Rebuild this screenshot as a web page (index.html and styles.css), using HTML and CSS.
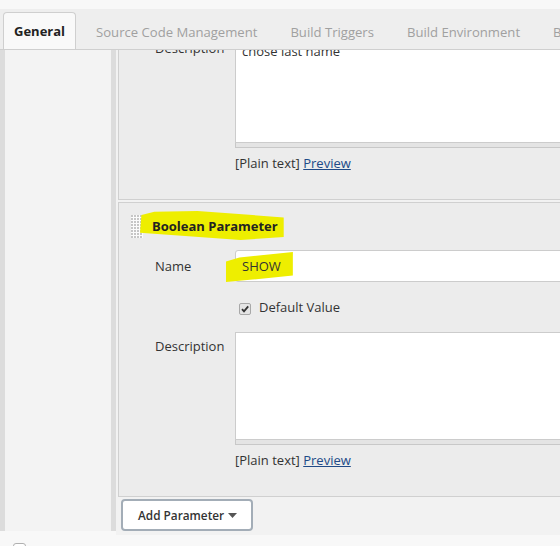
FILE: index.html
```html
<!DOCTYPE html>
<html>
<head>
<meta charset="utf-8">
<link rel="stylesheet" href="styles.css">
</head>
<body>
<div class="tabbar">
  <div class="tab active">General</div>
  <div class="tab first">Source Code Management</div>
  <div class="tab">Build Triggers</div>
  <div class="tab">Build Environment</div>
  <div class="tab">Build</div>
</div>
<div class="main">
  <div class="edge"></div>
  <div class="sidebar"></div>
  <div class="divider"></div>
  <div class="content">
    <div class="section s1">
      <div class="row">
        <div class="label">Description</div>
        <div class="field">
          <div class="textarea ta1">chose last name</div>
          <div class="handle"></div>
          <div class="hint">[Plain text] <a class="link">Preview</a></div>
        </div>
      </div>
    </div>
    <div class="section s2">
      <div class="title-row">
        <svg class="grip" width="12" height="23" viewBox="0 0 12 23">
          <defs>
            <pattern id="dots" width="3" height="3" patternUnits="userSpaceOnUse">
              <rect width="3" height="3" fill="#fbfbfb"/>
              <rect x="0" y="0" width="2" height="2" fill="#c6c6c6"/>
            </pattern>
          </defs>
          <rect width="12" height="23" fill="url(#dots)"/>
        </svg>
        <span class="title">Boolean Parameter</span>
      </div>
      <div class="row name-row">
        <div class="label">Name</div>
        <div class="field">
          <div class="input"><span class="show">SHOW</span></div>
        </div>
      </div>
      <div class="row check-row">
        <div class="label"></div>
        <div class="field check-field">
          <span class="checkbox">
            <svg width="12" height="12" viewBox="0 0 12 12"><path d="M3 6.2 L5 8.4 L9.2 3.4" fill="none" stroke="#333" stroke-width="1.8"/></svg>
          </span>
          <span class="check-label">Default Value</span>
        </div>
      </div>
      <div class="row desc-row">
        <div class="label">Description</div>
        <div class="field">
          <div class="textarea ta2"></div>
          <div class="handle"></div>
          <div class="hint">[Plain text] <a class="link">Preview</a></div>
        </div>
      </div>
    </div>
    <div class="actions">
      <button class="add-btn">Add Parameter <svg class="caret" width="9" height="5" viewBox="0 0 9 5"><path d="M0 0 H9 L4.5 5 Z" fill="#555"/></svg></button>
    </div>
  </div>
</div>
<div class="footer"><span class="foot-check"></span></div>
</body>
</html>
```
FILE: styles.css
```css
html, body {
  margin: 0;
  width: 560px;
  height: 546px;
  overflow: hidden;
}
body {
  background: #f8f8f8;
  font-family: "Open Sans", "Noto Sans", sans-serif;
  font-size: 13px;
  color: #333;
}
.tabbar {
  margin-top: 9px;
  height: 40px;
  background: #eeeeee;
  border-bottom: 1px solid #cfcfcf;
  display: flex;
  align-items: flex-end;
  padding-left: 3px;
  white-space: nowrap;
  overflow: hidden;
  position: relative;
  z-index: 2;
}
.tab {
  height: 36px;
  line-height: 38px;
  padding: 0 16.5px;
  color: #a0a0a0;
  font-size: 13.1px;
  flex: none;
}
.tab.first {
  padding-left: 20px;
}
.tab.active {
  background: #f9f9f9;
  border: 1px solid #cfcfcf;
  border-bottom: 0;
  border-radius: 4px 4px 0 0;
  color: #222;
  font-weight: bold;
  font-size: 13px;
  line-height: 37px;
  padding: 0 10px;
  height: 36px;
}
.main {
  display: flex;
  height: 485px;
  overflow: hidden;
}
.edge, .divider {
  width: 5px;
  flex: none;
  background: #dcdcdc;
  margin-bottom: 4px;
}
.sidebar {
  width: 106px;
  flex: none;
  background: #f3f3f3;
  margin-bottom: 4px;
}
.content {
  flex: none;
  width: 700px;
  background: #f2f2f2;
  padding-left: 2px;
  overflow: hidden;
}
.section {
  background: #ececec;
  border: 1px solid #d0d0d0;
  border-right: none;
}
.s1 {
  margin-top: -14px;
  padding-top: 1px;
  padding-bottom: 27px;
}
.s1 .label {
  padding-top: 1px;
}
.s2 {
  margin-top: 2px;
  padding-top: 11px;
  padding-bottom: 27px;
}
.row {
  display: flex;
}
.label {
  width: 80px;
  flex: none;
  padding-left: 36px;
  padding-top: 5px;
  line-height: 18px;
  color: #333;
}
.field {
  flex: 1;
}
.textarea {
  background: #fff;
  border: 1px solid #cccccc;
  box-sizing: border-box;
  padding: 3px 6px;
  line-height: 18px;
  color: #333;
}
.ta1 { height: 105px; }
.ta2 { height: 108px; }
.handle {
  height: 4px;
  background: #e4e4e4;
  border: 1px solid #c8c8c8;
  border-top: none;
}
.hint {
  margin-top: 6px;
  line-height: 18px;
  color: #333;
}
.link {
  color: #204a87;
  text-decoration: underline;
}
.title-row {
  display: flex;
  align-items: center;
  height: 24px;
  padding-left: 12px;
}
.grip {
  display: block;
  flex: none;
}
.title {
  margin-left: 9px;
  font-weight: bold;
  color: #222;
  position: relative;
  z-index: 0;
  line-height: 18px;
}
.title::before {
  content: "";
  position: absolute;
  left: -12px;
  right: -6px;
  top: -6px;
  bottom: -5px;
  background: #eeee00;
  clip-path: polygon(1% 14%, 10% 3%, 40% 0%, 100% 22%, 100% 90%, 70% 100%, 0% 75%);
  z-index: -1;
}
.name-row {
  margin-top: 12px;
}
.name-row .label {
  padding-top: 7px;
}
.input {
  height: 32px;
  box-sizing: border-box;
  background: #fff;
  border: 1px solid #cccccc;
  border-radius: 3px;
  padding: 0 6px;
  line-height: 30px;
  color: #333;
}
.show {
  position: relative;
  z-index: 0;
}
.show::before {
  content: "";
  position: absolute;
  left: -16px;
  right: -12px;
  top: -5px;
  bottom: -7px;
  background: #eeee00;
  clip-path: polygon(0% 32%, 20% 18%, 100% 0%, 100% 78%, 40% 92%, 0% 100%);
  z-index: -1;
}
.check-row {
  margin-top: 15px;
}
.check-field {
  display: flex;
  align-items: center;
  height: 20px;
  padding-left: 4px;
}
.checkbox {
  width: 12px;
  height: 12px;
  box-sizing: border-box;
  border: 1px solid #a8a8a8;
  border-radius: 2px;
  background: #e4e4e4;
  display: flex;
  margin-top: 4px;
}
.checkbox svg {
  display: block;
  margin: -1px;
}
.check-label {
  margin-left: 8px;
  line-height: 20px;
  color: #333;
}
.desc-row {
  margin-top: 15px;
}
.actions {
  padding-top: 2px;
  padding-left: 3px;
}
.add-btn {
  display: flex;
  align-items: center;
  width: 132px;
  height: 32px;
  box-sizing: border-box;
  background: #fff;
  border: 2px solid #a3adb7;
  border-radius: 4px;
  padding: 0 0 0 15px;
  font-family: "Open Sans", "Noto Sans", sans-serif;
  font-size: 11.8px;
  font-weight: 600;
  color: #333;
}
.caret {
  margin-left: 4px;
  display: block;
}
.footer {
  padding-top: 8px;
  padding-left: 13px;
}
.foot-check {
  display: block;
  width: 13px;
  height: 13px;
  box-sizing: border-box;
  border: 1px solid #b0b0b0;
  border-radius: 3px;
  background: #fff;
}
```
